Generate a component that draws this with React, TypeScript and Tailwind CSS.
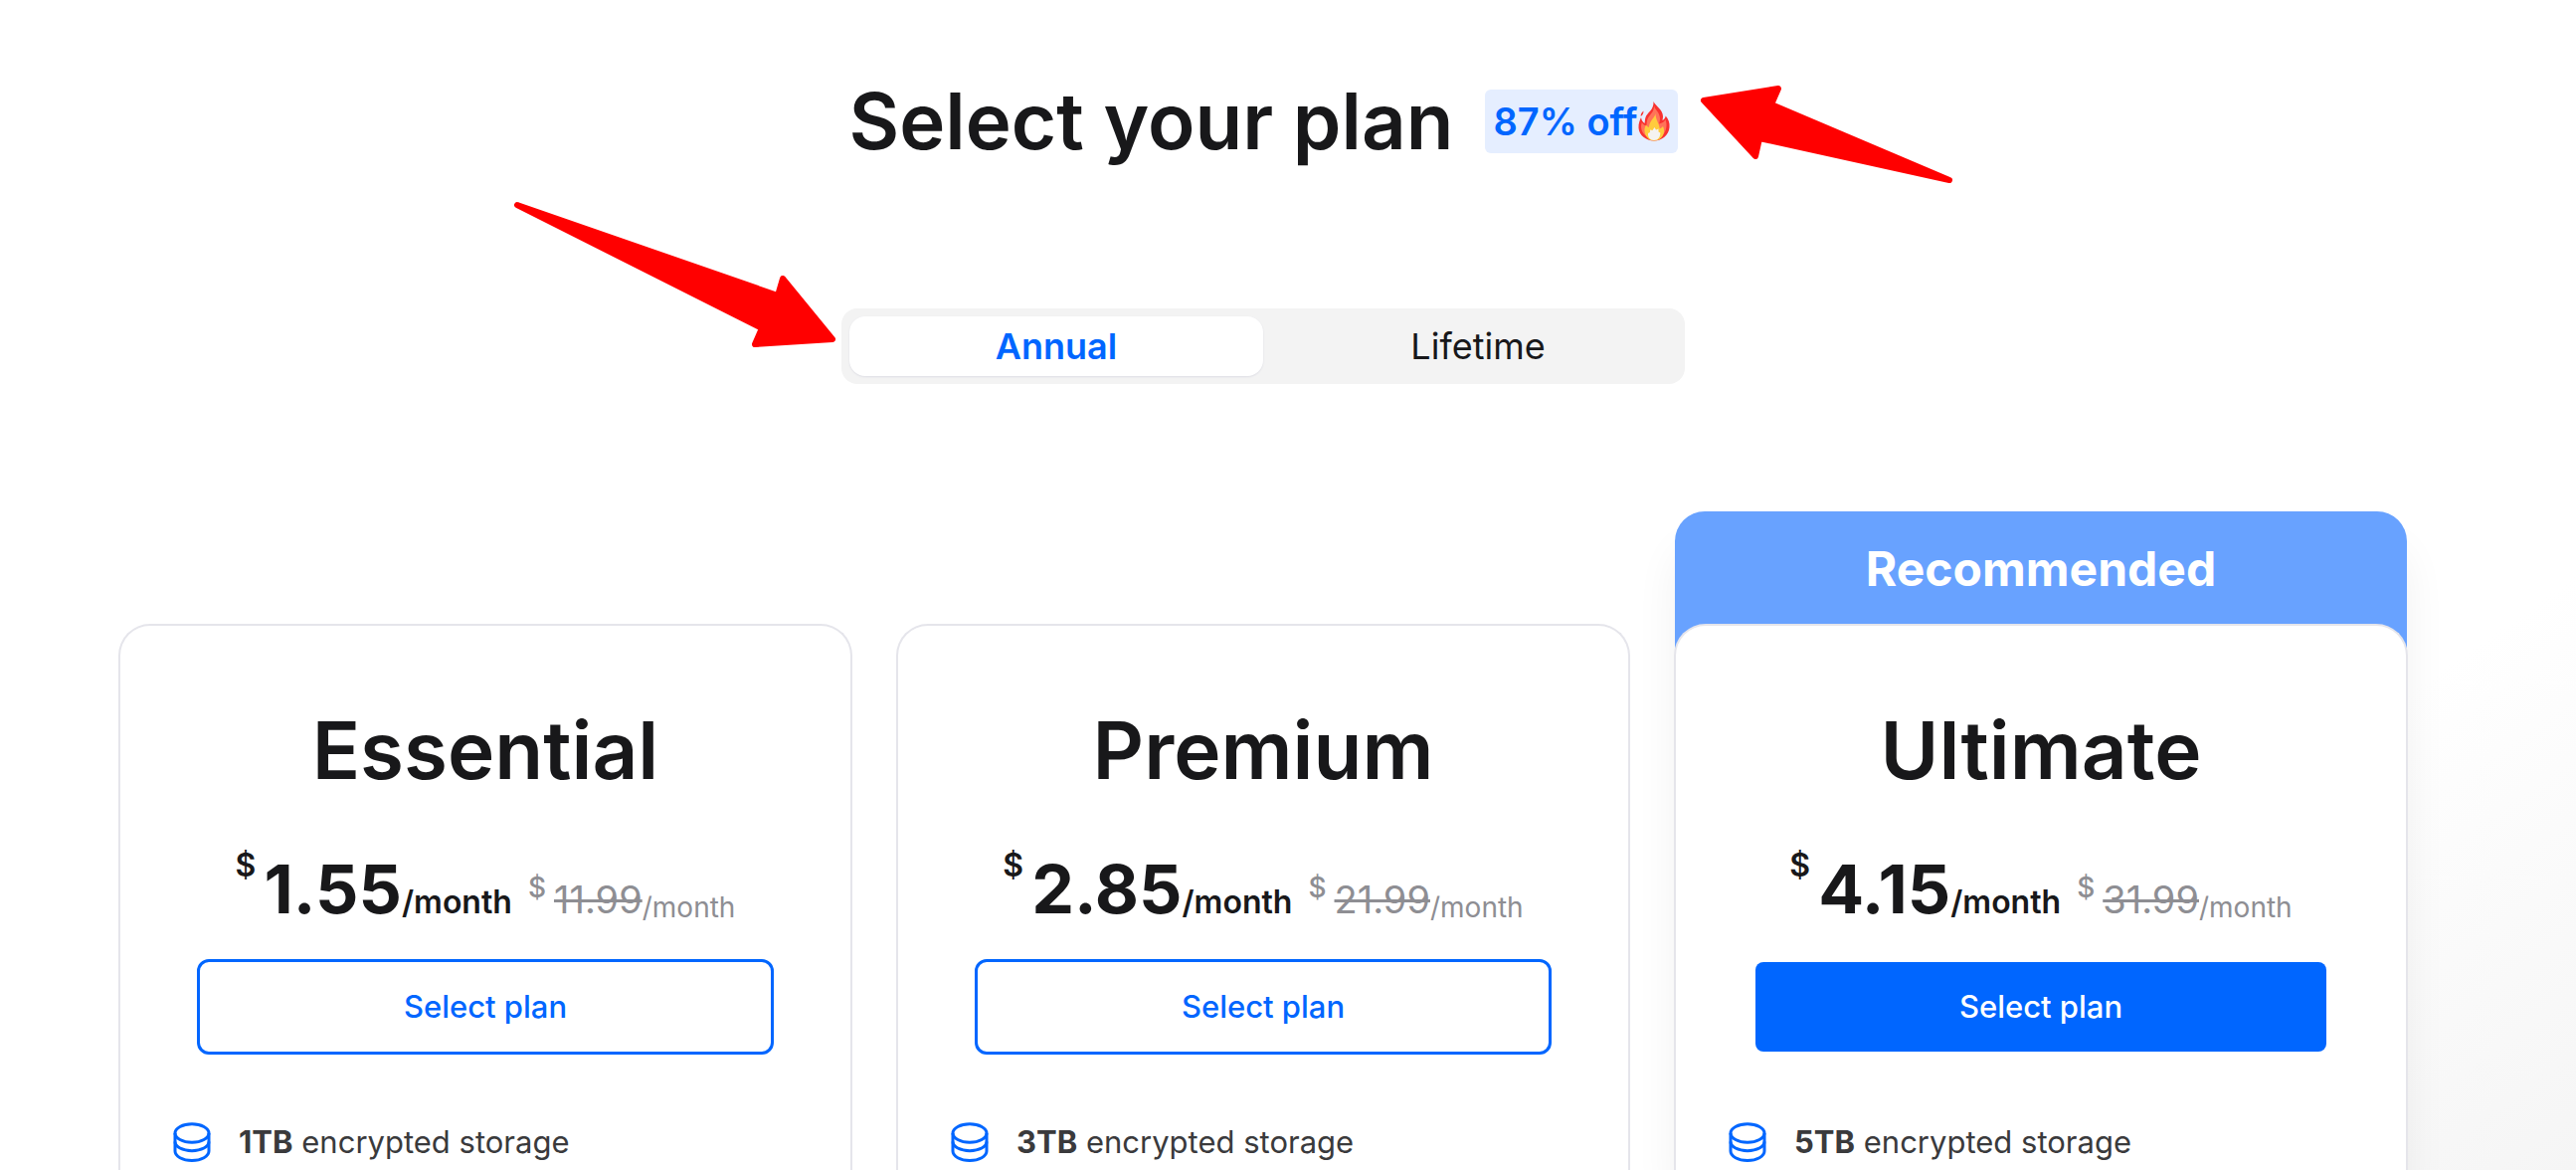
import { useState } from "react";

type Plan = {
  name: string;
  price: string;
  oldPrice: string;
  storage: string;
  recommended?: boolean;
};

const plans: Plan[] = [
  { name: "Essential", price: "1.55", oldPrice: "11.99", storage: "1TB" },
  { name: "Premium", price: "2.85", oldPrice: "21.99", storage: "3TB" },
  { name: "Ultimate", price: "4.15", oldPrice: "31.99", storage: "5TB", recommended: true },
];

function Flame() {
  return (
    <svg viewBox="0 0 32 40" className="h-10 w-8" aria-hidden="true">
      <path d="M15.5 0c1.500 4 9.500 8 9.500 15 0 1.500-.3 3-.5 4 1.500-1 3-2.500 3.200-4.500C30.500 17.500 32 21.500 31.500 26c-.7 8-7.500 13.500-15.500 13.500S1 34 .5 26.500C.2 22 2 18.500 3 16c.5 3 1.500 4.500 3.500 6 .5-2 .2-3.500 1-6C9 11 16 9 15.500 0z" fill="#f8312f" />
      <path d="M16 4c.5 4 6 7 6 13 0 2-.5 4-.8 5.500 3-.8 5-2 6.300-4.500 1 3 1.300 5.500.8 8.500-1 6.500-6.500 11-12.300 11S4 33 3.200 27c-.3-2.500 0-4 .6-6 1 1.800 2.500 3 4.700 3.500C8.500 21 9 18.500 10 16.500 12 13 16.500 10 16 4z" fill="#ff7359" />
      <path d="M17.500 12c-.2 4-6.500 7.500-6.500 14-1.500-.5-2.500-1.500-3-2.500-1.500 2.500-2 5-1.200 8C8 36 11.500 39.500 16 39.500s8.700-3 9.800-7.500c.6-3 .2-5-.8-7-1 1.200-2 2-3.300 2.300C21.500 22 17.500 19 17.500 12z" fill="#ffcb3d" />
      <path d="M16.500 26l1.500 2.500 2.500-1v3l1.800 1c.2 4-2.300 7.500-6.300 7.500s-6.300-3-6-7l2-1v-2.500l2.500.5z" fill="#f5f3f0" />
      <path d="M5.500 9.500c-2 1.500-3 3.500-2.800 5.500 1.800-1 2.800-3 2.800-5.500z" fill="#f8312f" />
    </svg>
  );
}

function StorageIcon() {
  return (
    <svg
      viewBox="0 0 38 40"
      className="h-10 w-[38px] shrink-0"
      fill="none"
      stroke="#0066ff"
      strokeWidth="3"
      aria-hidden="true"
    >
      <ellipse cx="19" cy="11" rx="17" ry="9.2" />
      <path d="M2 11v18c0 5.200 7.600 9.500 17 9.500s17-4.300 17-9.500V11" />
      <path d="M2 19.500c0 5.200 7.600 9.200 17 9.200s17-4 17-9.200" />
    </svg>
  );
}

function PlanCard({ plan }: { plan: Plan }) {
  return (
    <section className="relative flex min-w-0 flex-1 flex-col">
      {plan.recommended && (
        <div className="absolute inset-x-px -top-[113px] bottom-0 rounded-t-[30px] shadow-[0_36px_44px_rgba(0,0,0,0.06)]">
          <p className="h-[138px] rounded-t-[30px] bg-[#68a2ff] pt-7 text-center text-5xl leading-[60px] font-bold text-white">
            Recommended
          </p>
        </div>
      )}
      <div className="relative flex grow flex-col rounded-t-[32px] border-2 border-b-0 border-[#e5e5eb] bg-white px-[53px] pt-[75px]">
        <h2 className="text-center text-[80px] leading-[100px] font-semibold">{plan.name}</h2>
        <div className="mt-7 flex h-[132px] items-baseline justify-center whitespace-nowrap">
          <span className="mt-[18px] self-start text-[32px] leading-10 font-semibold">$</span>
          <span className="ml-2 text-[68px] leading-[122px] font-bold">{plan.price}</span>
          <span className="text-[32px] font-semibold">/month</span>
          <span className="mt-10 ml-4 self-start text-[28px] leading-10 font-medium text-[#8e8e93]">$</span>
          <s className="ml-2 text-[38px] text-[#8e8e93]">{plan.oldPrice}</s>
          <span className="mt-[60px] self-start text-[28px] leading-10 text-[#8e8e93]">/month</span>
        </div>
        <div className="flex h-24 items-center px-6">
          {plan.recommended ? (
            <div className="grow px-[3px]">
              <button type="button" className="h-[90px] w-full rounded-lg bg-[#0066ff] text-[31px] font-medium text-white">
                Select plan
              </button>
            </div>
          ) : (
            <button type="button" className="h-24 w-full rounded-xl border-3 border-[#0066ff] text-[31px] font-medium text-[#0066ff]">
              Select plan
            </button>
          )}
        </div>
        <ul className="mt-[68px]">
          <li className="flex items-center gap-7 text-[31px] leading-10 whitespace-nowrap text-[#3a3a3c]">
            <StorageIcon />
            <span>
              <strong className="font-bold">{plan.storage}</strong> encrypted storage
            </span>
          </li>
        </ul>
      </div>
    </section>
  );
}

export default function App() {
  const [period, setPeriod] = useState("Annual");
  return (
    <main className="flex min-h-screen flex-col overflow-hidden bg-white bg-[linear-gradient(145deg,#ffffff_80%,#f5f5f5_100%)] pr-[169px] pl-[119px] font-['Inter',sans-serif] text-[#18181a]">
      <header className="flex flex-col items-center pt-[72px]">
        <div className="flex items-center gap-8">
          <h1 className="text-[78px] leading-[100px] font-semibold whitespace-nowrap">Select your plan</h1>
          <div className="relative flex h-16 items-center rounded-md bg-[#e5eeff] px-2 text-[38px] font-semibold whitespace-nowrap text-[#0066ff]">
            87% off
            <Flame />
            <svg
              viewBox="0 0 260 124"
              className="absolute -top-6 left-full ml-[18px] h-31 w-65"
              fill="#ff0000"
              stroke="#ff0000"
              strokeWidth="6"
              strokeLinejoin="round"
              aria-hidden="true"
            >
              <path d="M8 35L83 23L76 39L255 115L64 73L60 91Z" />
            </svg>
          </div>
        </div>
        <div className="relative mt-[138px] grid h-19 w-[848px] grid-cols-[416px_1fr] rounded-2xl bg-[#f3f3f3] py-2 pl-2 text-[36px]">
          {["Annual", "Lifetime"].map((label) => (
            <button
              key={label}
              type="button"
              aria-pressed={period === label}
              onClick={() => setPeriod(label)}
              className={
                period === label
                  ? "rounded-2xl bg-white font-semibold text-[#0066ff] shadow-[0_1px_2px_#dedee4]"
                  : "rounded-2xl pl-2"
              }
            >
              {label}
            </button>
          ))}
          <svg
            viewBox="0 0 328 152"
            className="absolute right-full bottom-[34px] mr-1 h-38 w-[328px]"
            fill="#ff0000"
            stroke="#ff0000"
            strokeWidth="6"
            strokeLinejoin="round"
            aria-hidden="true"
          >
            <path d="M6 6L268 97L273 80L323 141L245 146L252 130Z" />
          </svg>
        </div>
      </header>
      <div className="mt-[241px] flex grow gap-11">
        {plans.map((plan) => (
          <PlanCard key={plan.name} plan={plan} />
        ))}
      </div>
    </main>
  );
}
